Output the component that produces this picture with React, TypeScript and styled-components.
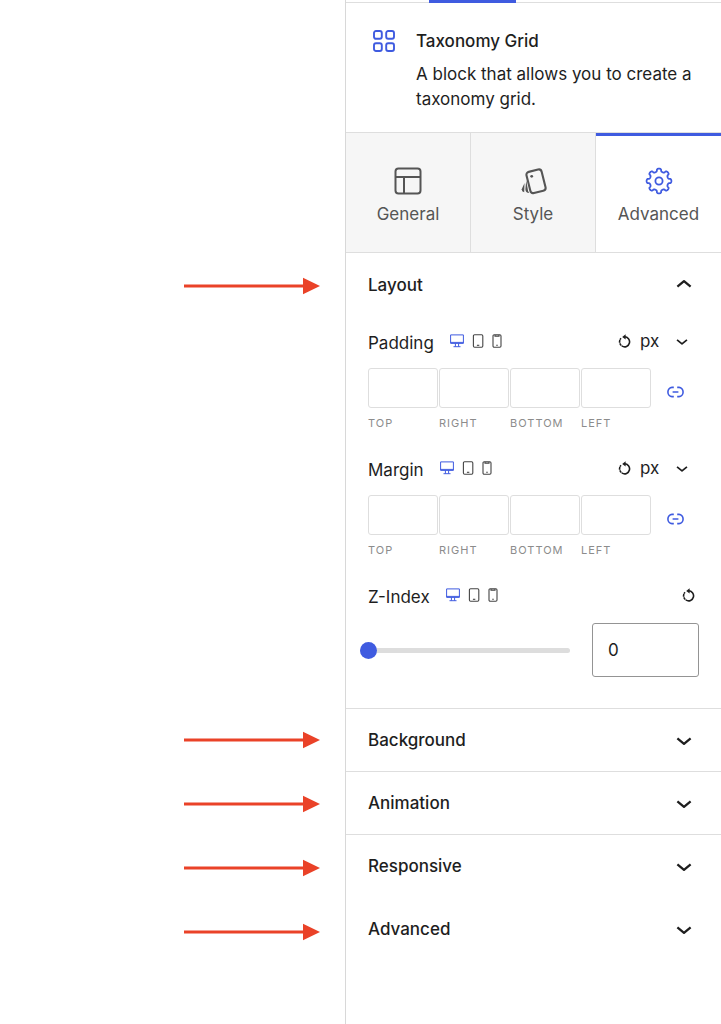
import React, { useState } from "react";
import styled, { createGlobalStyle, css } from "styled-components";

const blue = "#3f5be0";
const ink = "#1e1e1e";
const line = "#dedede";

const GlobalStyle = createGlobalStyle`
  *, *::before, *::after { box-sizing: border-box; }
  body {
    margin: 0;
    background: #fff;
    color: ${ink};
    font-family: Inter, "Liberation Sans", sans-serif;
    font-size: 17px;
    line-height: 24px;
  }
  button, input, select { font: inherit; color: inherit; }
  svg { display: block; flex: none; }
`;

const Page = styled.div`
  display: grid;
  grid-template-columns: minmax(0, 345fr) minmax(0, 376fr);
  min-height: 100vh;
`;

const Notes = styled.div`
  display: flex;
  flex-direction: column;
  align-items: flex-end;
  gap: 46px;
  padding: 277px 25px 0 0;
`;

const Arrow = styled.svg<{ $lead?: boolean }>`
  margin-bottom: ${(p) => (p.$lead ? "390px" : "0")};
`;

const Sidebar = styled.aside`
  border-left: 1px solid #d8d8d8;
`;

const TopStrip = styled.div`
  display: flex;
  height: 3px;
  padding-left: 83px;
  border-bottom: 1px solid ${line};
`;

const TopIndicator = styled.div`
  width: 87px;
  height: 3px;
  background: ${blue};
`;

const BlockCard = styled.header`
  display: flex;
  gap: 21px;
  padding: 26px 22px 20px 27px;
`;

const BlockTitle = styled.h2`
  margin: 0 0 9px;
  font-size: 17px;
  line-height: 24px;
  font-weight: 500;
`;

const BlockText = styled.p`
  margin: 0;
  line-height: 25px;
`;

const Tabs = styled.div`
  display: grid;
  grid-template-columns: repeat(3, 1fr);
  border-top: 1px solid ${line};
  border-bottom: 1px solid ${line};
`;

const Tab = styled.button<{ $active?: boolean }>`
  display: flex;
  flex-direction: column;
  align-items: center;
  gap: 7px;
  height: 119px;
  padding: 34px 0 0;
  border: 0;
  border-right: 1px solid ${line};
  background: #f6f6f6;
  color: #555;
  cursor: pointer;
  &:last-child { border-right: 0; }
  ${(p) => p.$active && css`
    background: #fff;
    box-shadow: inset 0 3px 0 ${blue};
    svg { color: ${blue}; }
  `}
`;

const Section = styled.section<{ $ruled?: boolean }>`
  border-top: ${(p) => (p.$ruled ? `1px solid ${line}` : "0")};
`;

const SectionToggle = styled.button<{ $short?: boolean }>`
  display: flex;
  align-items: center;
  justify-content: space-between;
  width: 100%;
  height: ${(p) => (p.$short ? "62px" : "63px")};
  padding: 0 29px 0 22px;
  border: 0;
  background: none;
  font-weight: 500;
  text-align: left;
  cursor: pointer;
`;

const SectionBody = styled.div`
  display: flex;
  flex-direction: column;
  gap: 25px;
  padding: 13px 22px 31px;
`;

const Field = styled.div``;

const FieldHead = styled.div`
  display: flex;
  align-items: flex-start;
  height: 26px;
`;

const FieldLabel = styled.span`
  padding-top: 2px;
  margin-right: 16px;
`;

const Devices = styled.div`
  display: flex;
  align-items: center;
  gap: 8px;
  height: 24px;
`;

const IconButton = styled.button<{ $active?: boolean }>`
  display: flex;
  align-items: center;
  padding: 0;
  border: 0;
  background: none;
  color: ${(p) => (p.$active ? blue : "#444")};
  cursor: pointer;
`;

const Tools = styled.div<{ $inset: number }>`
  display: flex;
  align-items: center;
  height: 24px;
  margin-left: auto;
  padding-right: ${(p) => p.$inset}px;
`;

const UnitSelect = styled.select`
  appearance: none;
  width: 36px;
  height: 24px;
  margin-left: 9px;
  padding: 0;
  border: 0;
  background: none;
`;

const Sides = styled.div`
  display: flex;
  align-items: flex-start;
  gap: 16px;
  margin-top: 13px;
  padding-right: 15px;
`;

const SideGrid = styled.div`
  flex: 1;
  display: grid;
  grid-template-columns: repeat(4, 1fr);
  gap: 1px;
`;

const SideLabel = styled.label`
  display: flex;
  flex-direction: column;
  gap: 7px;
  color: #8c8c8c;
  font-size: 11px;
  line-height: 16px;
  letter-spacing: 1px;
  text-transform: uppercase;
`;

const SideInput = styled.input`
  width: 100%;
  height: 40px;
  padding: 0 8px;
  border: 1px solid ${line};
  border-radius: 3px;
  background: #fff;
  color: ${ink};
`;

const LinkButton = styled(IconButton)`
  height: 48px;
`;

const SliderRow = styled.div`
  display: flex;
  align-items: center;
  gap: 22px;
  margin-top: 14px;
`;

const Slider = styled.input`
  appearance: none;
  flex: 1;
  min-width: 0;
  height: 17px;
  margin: 0 0 0 -8px;
  background: none;
  &::-webkit-slider-runnable-track {
    height: 5px;
    border-radius: 3px;
    background: #ddd;
  }
  &::-webkit-slider-thumb {
    appearance: none;
    width: 17px;
    height: 17px;
    margin-top: -6px;
    border-radius: 50%;
    background: ${blue};
  }
`;

const NumberInput = styled.input`
  appearance: textfield;
  width: 107px;
  height: 54px;
  padding: 0 15px;
  border: 1px solid #949494;
  border-radius: 3px;
  background: #fff;
  &::-webkit-inner-spin-button { appearance: none; margin: 0; }
`;

const NoteArrow = ({ lead }: { lead?: boolean }) => (
  <Arrow $lead={lead} width="136" height="18" viewBox="0 0 136 18" aria-hidden="true">
    <path d="M0 9H121" stroke="#ea4228" strokeWidth="3" />
    <path d="M119 .8 136 9 119 17.2Z" fill="#ea4228" />
  </Arrow>
);

const BlockIcon = () => (
  <svg width="22" height="24" viewBox="0 -1 22 24" fill="none" stroke={blue} strokeWidth="1.9">
    <rect x="1" y="1" width="7.8" height="7.8" rx="2" />
    <rect x="13.2" y="1" width="7.8" height="7.8" rx="2" />
    <rect x="1" y="13.2" width="7.8" height="7.8" rx="2" />
    <rect x="13.2" y="13.2" width="7.8" height="7.8" rx="2" />
  </svg>
);

const LayoutIcon = () => (
  <svg width="28" height="28" viewBox="0 0 28 28" fill="none" stroke="currentColor" strokeWidth="2">
    <rect x="1.5" y="1.5" width="25" height="25" rx="3" />
    <path d="M1.5 10H26.5M10 10V26.5" />
  </svg>
);

const SwatchIcon = () => (
  <svg width="28" height="28" viewBox="0 0 28 28" fill="none" stroke="currentColor" strokeWidth="2.1" strokeLinejoin="round">
    <rect x="9.2" y="3.4" width="15.6" height="21.8" rx="3" transform="rotate(-14 17 14.3)" />
    <circle cx="12.7" cy="9.3" r="1.4" fill="currentColor" stroke="none" />
    <path d="M7.2 13.6 6.4 22.2Q6.4 25.6 10.2 26Q8.8 24.6 8.4 20Z" fill="currentColor" stroke="none" />
    <path d="M5.5 16 2.7 22.2Q2.6 24.6 5.2 25.2Z" fill="currentColor" stroke="none" />
  </svg>
);

const gearPath = (() => {
  const points: string[] = [];
  for (let i = 0; i <= 192; i++) {
    const t = (i / 192) * Math.PI * 2;
    // Shifting the angle against the radius rounds each tooth into a lobe.
    const a = t + 0.05 * Math.sin(16 * t);
    const r = 10.9 + 1.5 * Math.cos(8 * t);
    points.push(`${(14 + r * Math.sin(a)).toFixed(2)} ${(14 - r * Math.cos(a)).toFixed(2)}`);
  }
  return `M${points.join("L")}Z`;
})();

const GearIcon = () => (
  <svg width="28" height="28" viewBox="0 0 28 28" fill="none" stroke="currentColor" strokeWidth="1.8" strokeLinejoin="round">
    <path d={gearPath} />
    <circle cx="14" cy="14" r="3.6" />
  </svg>
);

const Chevron = ({ up, small }: { up?: boolean; small?: boolean }) => (
  <svg
    width={small ? 12 : 16}
    height={small ? 10 : 12}
    viewBox="0 0 16 12"
    fill="none"
    stroke={ink}
    strokeWidth="2.3"
    strokeLinejoin="round"
  >
    <path d={up ? "M1.4 7.6 8 2.2 14.6 7.6" : "M1.4 4.4 8 9.8 14.6 4.4"} />
  </svg>
);

const DesktopIcon = () => (
  <svg width="14" height="14" viewBox="0 0 14 14" fill="none" stroke="currentColor">
    <path d="M.6 .9H13.4V9.4H.6ZM.6 8.4H13.4M5.4 9.4V12.6M8.6 9.4V12.6M3.5 12.7H10.5" />
  </svg>
);

const TabletIcon = () => (
  <svg width="12" height="14" viewBox="0 0 12 14" fill="none" stroke="currentColor" strokeWidth="1.1">
    <rect x="1.4" y=".7" width="9.4" height="12.5" rx="1.2" />
    <path d="M4.9 11.3H7.3" />
  </svg>
);

const PhoneIcon = () => (
  <svg width="10" height="14" viewBox="0 0 10 14" fill="none" stroke="currentColor" strokeWidth="1.1">
    <rect x="1" y=".7" width="8" height="12.5" rx="1.2" />
    <path d="M3 .9V2.1H7V.9M4.2 11.3H5.8" />
  </svg>
);

const ResetIcon = () => (
  <svg width="13" height="14" viewBox="0 0 13 14" fill="none" stroke={ink} strokeWidth="1.6">
    <path d="M6.5 2.8A5 5 0 1 1 3 4.3" />
    <path d="M1.9 5.6A4.9 4.9 0 0 0 6.5 12.6" stroke="#fff" strokeWidth="2" strokeDasharray=".5 2.8" />
    <path d="M7.6 .2V5.6L4.2 2.9Z" fill={ink} stroke="none" />
  </svg>
);

const LinkIcon = () => (
  <svg width="17" height="12" viewBox="0 0 17 12" fill="none" stroke={blue} strokeWidth="1.6">
    <path d="M6.8 1.4H5A4.1 4.6 0 0 0 5 10.6H6.8M10.2 1.4H12A4.1 4.6 0 0 1 12 10.6H10.2M5.6 6H11.4" />
  </svg>
);

const DeviceSwitch = () => (
  <Devices>
    <IconButton $active aria-label="Desktop"><DesktopIcon /></IconButton>
    <IconButton aria-label="Tablet"><TabletIcon /></IconButton>
    <IconButton aria-label="Phone"><PhoneIcon /></IconButton>
  </Devices>
);

const SpacingField = ({ label }: { label: string }) => (
  <Field role="group" aria-label={label}>
    <FieldHead>
      <FieldLabel>{label}</FieldLabel>
      <DeviceSwitch />
      <Tools $inset={11}>
        <IconButton aria-label={`Reset ${label}`}><ResetIcon /></IconButton>
        <UnitSelect aria-label={`${label} unit`} defaultValue="px">
          <option>px</option>
          <option>em</option>
          <option>%</option>
        </UnitSelect>
        <Chevron small />
      </Tools>
    </FieldHead>
    <Sides>
      <SideGrid>
        {["Top", "Right", "Bottom", "Left"].map((side) => (
          <SideLabel key={side}>
            <SideInput type="text" inputMode="numeric" />
            {side}
          </SideLabel>
        ))}
      </SideGrid>
      <LinkButton aria-label="Link sides"><LinkIcon /></LinkButton>
    </Sides>
  </Field>
);

const ZIndexField = () => {
  const [value, setValue] = useState(0);
  return (
    <Field>
      <FieldHead>
        <FieldLabel as="label" htmlFor="z-index">Z-Index</FieldLabel>
        <DeviceSwitch />
        <Tools $inset={4}>
          <IconButton aria-label="Reset Z-Index" onClick={() => setValue(0)}><ResetIcon /></IconButton>
        </Tools>
      </FieldHead>
      <SliderRow>
        <Slider
          type="range"
          min={0}
          max={100}
          value={value}
          aria-label="Z-Index slider"
          onChange={(e) => setValue(Number(e.target.value))}
        />
        <NumberInput
          id="z-index"
          type="number"
          value={value}
          onChange={(e) => setValue(Number(e.target.value))}
        />
      </SliderRow>
    </Field>
  );
};

export default function App() {
  return (
    <>
      <GlobalStyle />
      <Page>
        <Notes>
          <NoteArrow lead />
          <NoteArrow />
          <NoteArrow />
          <NoteArrow />
          <NoteArrow />
        </Notes>
        <Sidebar>
          <TopStrip><TopIndicator /></TopStrip>
          <BlockCard>
            <BlockIcon />
            <div>
              <BlockTitle>Taxonomy Grid</BlockTitle>
              <BlockText>A block that allows you to create a taxonomy grid.</BlockText>
            </div>
          </BlockCard>
          <Tabs role="tablist">
            <Tab role="tab" aria-selected={false}><LayoutIcon />General</Tab>
            <Tab role="tab" aria-selected={false}><SwatchIcon />Style</Tab>
            <Tab role="tab" aria-selected $active><GearIcon />Advanced</Tab>
          </Tabs>
          <Section>
            <SectionToggle aria-expanded>Layout<Chevron up /></SectionToggle>
            <SectionBody>
              <SpacingField label="Padding" />
              <SpacingField label="Margin" />
              <ZIndexField />
            </SectionBody>
          </Section>
          <Section $ruled>
            <SectionToggle $short aria-expanded={false}>Background<Chevron /></SectionToggle>
          </Section>
          <Section $ruled>
            <SectionToggle $short aria-expanded={false}>Animation<Chevron /></SectionToggle>
          </Section>
          <Section $ruled>
            <SectionToggle $short aria-expanded={false}>Responsive<Chevron /></SectionToggle>
          </Section>
          <Section>
            <SectionToggle aria-expanded={false}>Advanced<Chevron /></SectionToggle>
          </Section>
        </Sidebar>
      </Page>
    </>
  );
}
